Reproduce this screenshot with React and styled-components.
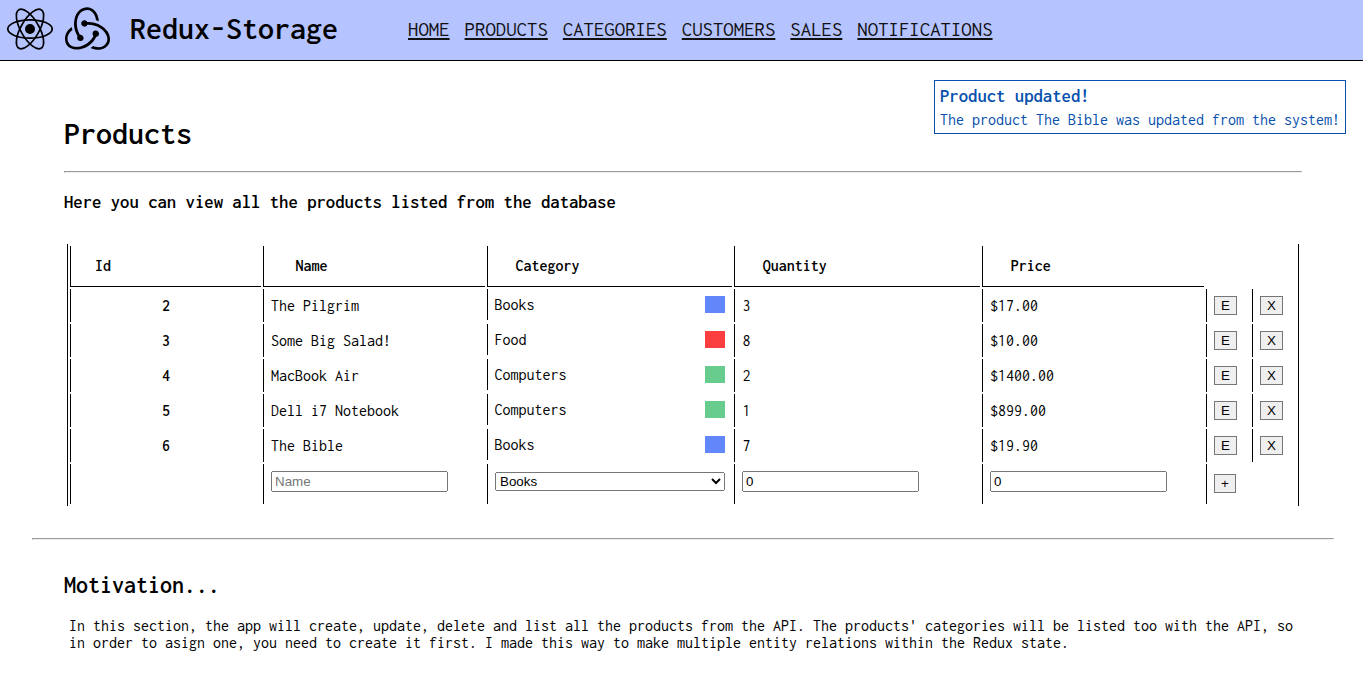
import React from 'react';
import styled, { createGlobalStyle } from 'styled-components';
import { SiRedux } from 'react-icons/si';

const GlobalStyle = createGlobalStyle`
  * { box-sizing: border-box; }
  body {
    margin: 0;
    background: #fff;
    color: #000;
    font: 16px/17px Inconsolata, "Noto Sans Mono CJK SC", "DejaVu Sans Mono", monospace;
  }
`;

const Header = styled.header`
  display: flex;
  align-items: center;
  height: 61px;
  background: #b5c3ff;
  border-bottom: 1px solid #000;
`;

const Logos = styled.div`
  display: flex;
  align-items: flex-start;
  align-self: flex-start;
  gap: 12px;
  padding: 6px 0 0 7px;
  svg { display: block; }
`;

const Brand = styled.h1`
  margin: 0 0 3px 20px;
  width: 278px;
  font-size: 32px;
  line-height: 34px;
  font-weight: 600;
`;

const Nav = styled.nav`
  display: flex;
  gap: 15px;
  margin-bottom: 2px;
`;

const NavLink = styled.a`
  color: #111;
  font-size: 20.8px;
  line-height: 22px;
  text-decoration: underline;
  text-decoration-thickness: 2px;
  text-underline-offset: 2px;
`;

const Toast = styled.aside`
  position: absolute;
  top: 80px;
  right: 17px;
  width: 412px;
  height: 54px;
  padding: 5px;
  border: 1px solid #0750ad;
  background: #fff;
  color: #0750ad;
  white-space: nowrap;
`;

const ToastTitle = styled.h3`
  margin: 0 0 5px;
  font-size: 18.72px;
  line-height: 20px;
  font-weight: 600;
`;

const ToastText = styled.p`
  margin: 0;
  color: #0750ad;
`;

const Section = styled.section`
  padding: 56px 61px 32px 64px;
`;

const Title = styled.h1`
  margin: 0;
  font-size: 32px;
  line-height: 34px;
  font-weight: 600;
`;

const Rule = styled.hr`
  margin: ${(p) => p.$margin};
`;

const Subtitle = styled.h3`
  margin: 0 0 32px;
  font-size: 18.72px;
  line-height: 20px;
  font-weight: 600;
`;

const Table = styled.table`
  width: 1232px;
  margin-left: 3px;
  table-layout: fixed;
  border-collapse: separate;
  border-spacing: 2px;
  border: solid #000;
  border-width: 0 1px;
`;

const HeadCell = styled.th`
  height: 41px;
  padding: 0 0 2px ${(p) => p.$indent}px;
  border: solid #000;
  border-width: 0 0 1px 1px;
  text-align: left;
  font-weight: 600;
`;

const Cell = styled.td`
  height: ${(p) => (p.$form ? 40 : 33)}px;
  padding: ${(p) => (p.$form ? '7px 7px 0' : '0 7px')};
  border-left: 1px solid #000;
  vertical-align: ${(p) => (p.$form ? 'top' : 'middle')};
`;

const IdCell = styled(Cell)`
  text-align: center;
  font-weight: 600;
`;

const QuantityCell = styled(Cell)`
  padding-left: 7.5px;
`;

const CategoryCell = styled.td`
  padding: 0;
  vertical-align: top;
`;

const Category = styled.div`
  display: flex;
  align-items: center;
  justify-content: space-between;
  height: 31px;
  padding: 0 7px 0 6.4px;
  border-left: 1px solid #000;
`;

const Swatch = styled.span`
  width: 20px;
  height: 17px;
  background: ${(p) => p.$color};
`;

const Input = styled.input`
  display: block;
  width: 177px;
  height: 21px;
  font: 13.333px "Liberation Sans", Arial, sans-serif;
`;

const Select = styled.select`
  display: block;
  width: 230px;
  height: 19px;
  margin-top: 1px;
  font: 13.333px "Liberation Sans", Arial, sans-serif;
`;

const Button = styled.button`
  display: block;
  width: ${(p) => p.$width || 23}px;
  height: 19px;
  margin-top: ${(p) => p.$top || 0}px;
  padding: 0;
  border: 1px solid #767676;
  background: #efefef;
  color: #000;
  font: 13.333px/17px "Liberation Sans", Arial, sans-serif;
`;

const Motivation = styled.section`
  padding: 0 61px 0 64px;
`;

const MotivationTitle = styled.h2`
  margin: 0 0 19px;
  font-size: 24px;
  line-height: 26px;
  font-weight: 600;
`;

const Text = styled.p`
  margin: 0 5px;
`;

const LINKS = ['HOME', 'PRODUCTS', 'CATEGORIES', 'CUSTOMERS', 'SALES', 'NOTIFICATIONS'];
const COLUMNS = [['Id', 24], ['Name', 31.4], ['Category', 27.4], ['Quantity', 27.8], ['Price', 27.8]];
const WIDTHS = [191, 222, 245, 246, 222, 44, 44];
const COLORS = { Books: '#6187fa', Food: '#fb3f40', Computers: '#69cc8f' };
const PRODUCTS = [
  [2, 'The Pilgrim', 'Books', 3, '$17.00'],
  [3, 'Some Big Salad!', 'Food', 8, '$10.00'],
  [4, 'MacBook Air', 'Computers', 2, '$1400.00'],
  [5, 'Dell i7 Notebook', 'Computers', 1, '$899.00'],
  [6, 'The Bible', 'Books', 7, '$19.90'],
];

function ReactLogo() {
  return (
    <svg width="46" height="46" viewBox="-23 -23 46 46" fill="none" stroke="#000" strokeWidth="1.7">
      {[0, 60, 120].map((a) => (
        <ellipse key={a} rx="22.2" ry="9.1" transform={`rotate(${a})`} />
      ))}
      <circle r="5" fill="#000" stroke="none" />
    </svg>
  );
}

export default function App() {
  return (
    <>
      <GlobalStyle />
      <Header>
        <Logos>
          <ReactLogo />
          <SiRedux size={45} />
        </Logos>
        <Brand>Redux-Storage</Brand>
        <Nav>
          {LINKS.map((l) => <NavLink key={l} href="#">{l}</NavLink>)}
        </Nav>
      </Header>
      <Toast>
        <ToastTitle>Product updated!</ToastTitle>
        <ToastText>The product The Bible was updated from the system!</ToastText>
      </Toast>
      <main>
        <Section>
          <Title>Products</Title>
          <Rule $margin="20px 0 19px" />
          <Subtitle>Here you can view all the products listed from the database</Subtitle>
          <Table>
            <colgroup>
              {WIDTHS.map((w, i) => <col key={i} style={{ width: w }} />)}
            </colgroup>
            <thead>
              <tr>
                {COLUMNS.map(([name, indent]) => <HeadCell key={name} $indent={indent}>{name}</HeadCell>)}
              </tr>
            </thead>
            <tbody>
              {PRODUCTS.map(([id, name, category, quantity, price]) => (
                <tr key={id}>
                  <IdCell>{id}</IdCell>
                  <Cell>{name}</Cell>
                  <CategoryCell>
                    <Category>{category}<Swatch $color={COLORS[category]} /></Category>
                  </CategoryCell>
                  <QuantityCell>{quantity}</QuantityCell>
                  <Cell>{price}</Cell>
                  <Cell><Button>E</Button></Cell>
                  <Cell><Button>X</Button></Cell>
                </tr>
              ))}
              <tr>
                <Cell $form />
                <Cell $form><Input placeholder="Name" /></Cell>
                <Cell $form>
                  <Select defaultValue="Books">
                    {Object.keys(COLORS).map((c) => <option key={c}>{c}</option>)}
                  </Select>
                </Cell>
                <Cell $form><Input defaultValue="0" /></Cell>
                <Cell $form><Input defaultValue="0" /></Cell>
                <Cell $form colSpan={2}><Button $width={22} $top={3}>+</Button></Cell>
              </tr>
            </tbody>
          </Table>
        </Section>
        <Rule $margin="0 29px 32px 32px" />
        <Motivation>
          <MotivationTitle>Motivation...</MotivationTitle>
          <Text>
            In this section, the app will create, update, delete and list all the products from the API.
            The products' categories will be listed too with the API, so in order to asign one, you need
            to create it first. I made this way to make multiple entity relations within the Redux state.
          </Text>
        </Motivation>
      </main>
    </>
  );
}
